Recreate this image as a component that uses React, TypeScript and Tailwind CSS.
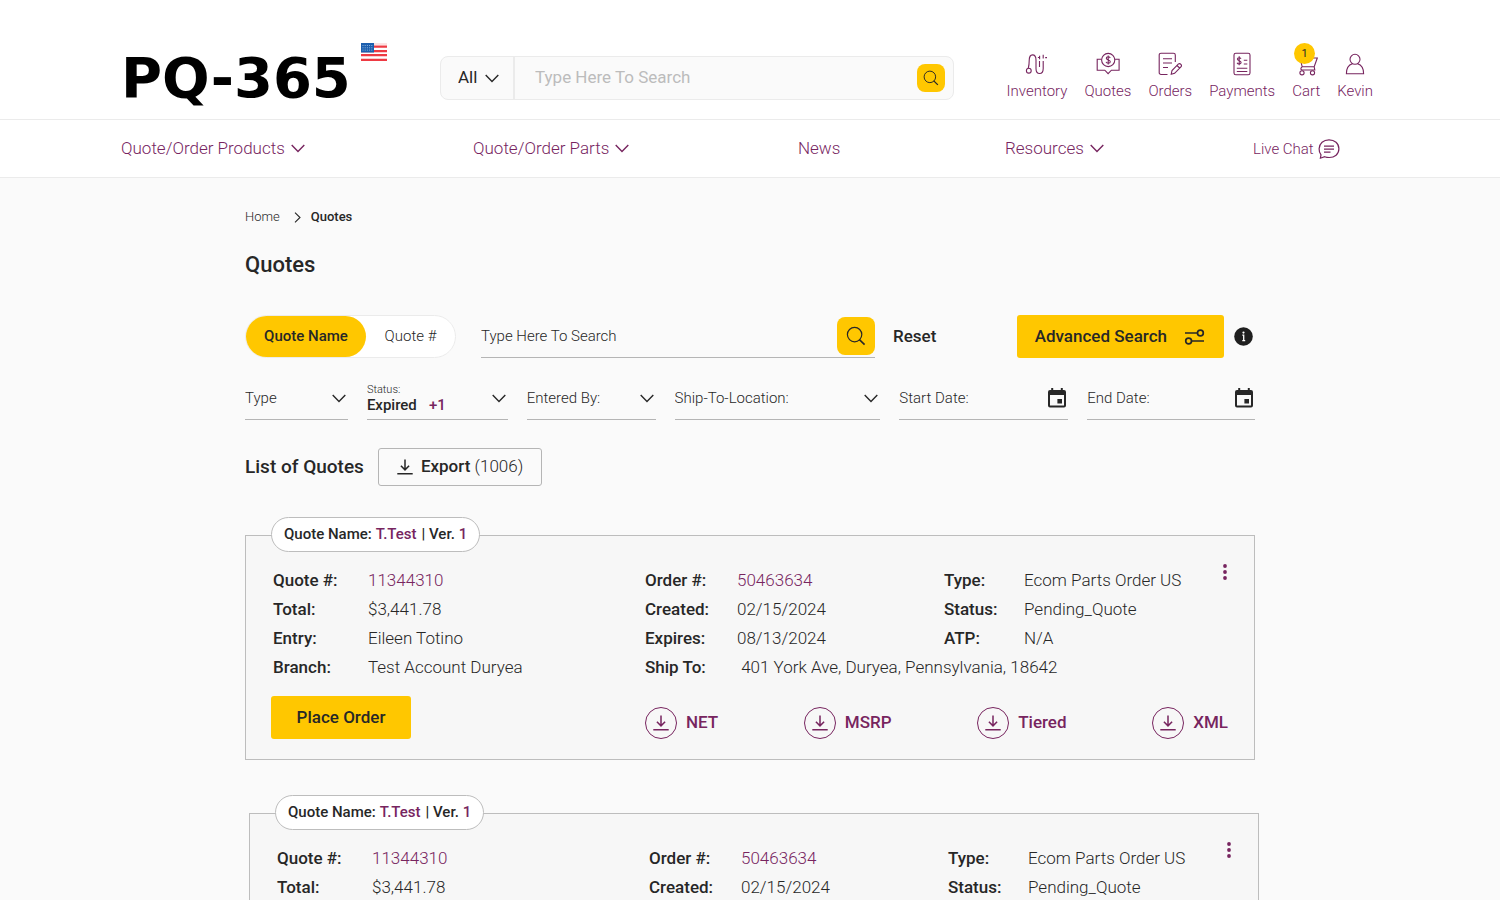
import React from "react";

type IconProps = { className?: string };

function Chevron({ className = "" }: IconProps) {
  return (
    <svg className={className} width="14" height="9" viewBox="0 0 14 9" fill="none" stroke="currentColor" strokeWidth="1.4" aria-hidden="true">
      <path d="M0.7 1 7 7.6 13.3 1" />
    </svg>
  );
}

function SearchIcon({ className = "" }: IconProps) {
  return (
    <svg className={className} viewBox="0 0 20 20" fill="none" stroke="currentColor" strokeWidth="1.2" aria-hidden="true">
      <circle cx="8.6" cy="8.6" r="7.2" />
      <path d="m13.4 13.6 5.2 5" strokeWidth="1.6" />
    </svg>
  );
}

function DownloadIcon({ className = "" }: IconProps) {
  return (
    <svg className={className} width="16" height="16" viewBox="0 0 16 16" fill="none" stroke="currentColor" strokeWidth="1.5" aria-hidden="true">
      <path d="M8 0.5v10.2M3.9 6.8 8 10.9l4.1-4.1M0.3 14.8h15.4" />
    </svg>
  );
}

function CalendarIcon() {
  return (
    <svg width="18" height="20" viewBox="0 0 18 20" fill="currentColor" aria-hidden="true">
      <path fillRule="evenodd" d="M3.2 0h2v2h7.6V0h2v2H16a2 2 0 0 1 2 2v13.5a2 2 0 0 1-2 2H2a2 2 0 0 1-2-2V4a2 2 0 0 1 2-2h1.2zM2 7v10.5h14V7zM9.4 11h4.6v4.5H9.4z" />
    </svg>
  );
}

function Flag() {
  return (
    <svg width="26" height="18" viewBox="0 0 26 18" role="img" aria-label="United States">
      <rect width="26" height="18" fill="#fff" />
      <path d="M0 3.7h26M0 8.2h26M0 12.2h26M0 16.8h26" stroke="#ee3a43" strokeWidth="2.2" />
      <path d="M0 1h26" stroke="#f9c4c6" strokeWidth="1" />
      <rect width="13" height="9.5" fill="#1c5fae" />
      <path d="M1.5 2.5h10M1.5 4.8h10M1.5 7.1h10" stroke="#8db4dd" strokeWidth="1" strokeDasharray="1 1.2" />
    </svg>
  );
}

const iconProps = {
  width: 24,
  height: 24,
  viewBox: "0 0 24 24",
  fill: "none",
  stroke: "currentColor",
  strokeWidth: 1.1,
  "aria-hidden": true,
} as const;

function InventoryIcon() {
  return (
    <svg {...iconProps}>
      <circle cx="3.8" cy="18.7" r="2.4" />
      <path d="M3.3 16.2c.7-2.6.9-5 .9-7.6C4.2 5 5.4 2.900 7.500 2.900s3.500 2.100 3.500 5.100v8.500c0 3.200 1.200 5 3.600 5s3.600-1.800 3.600-5V9" />
      <path d="M14.500 9v6" />
      <path d="M14.600 3.800v3.500M12.900 5.500h1.700M18.200 2.800v3.800M20.200 5.600h1.800" />
    </svg>
  );
}

function QuotesIcon() {
  return (
    <svg {...iconProps}>
      <circle cx="12.2" cy="8" r="6.6" />
      <path d="M5.5 7.3H1.2v10.9h7.6l3.3 3.4 3.3-3.4h7.7V7.3h-4.2" />
      <path d="M14.2 5.9c-.4-.8-1.100-1.100-2-1.100-1.100 0-1.900.6-1.900 1.500 0 2.200 4 1.100 4 3.400 0 .9-.9 1.500-2.100 1.500-1 0-1.800-.4-2.200-1.300M12.200 3.600v8.800" />
    </svg>
  );
}

function OrdersIcon() {
  return (
    <svg {...iconProps}>
      <path d="M9.5 22.500H3A1.800 1.800 0 0 1 1.200 20.700V3A1.800 1.800 0 0 1 3 1.200h12.500A1.800 1.800 0 0 1 17.300 3v7M5 6.700h9M5 11h9M5 15.500h5" />
      <path d="m13.200 22.300.8-3.800 6.200-6.400c1.900-1.400 4.300.9 2.700 2.900l-6.300 6.300zM19 13.500l2.600 2.500" />
    </svg>
  );
}

function PaymentsIcon() {
  return (
    <svg {...iconProps}>
      <rect x="4" y="1.200" width="16" height="21.600" rx="1.800" />
      <path d="M6.800 16.200h10.500M6.800 19.500h10.500M13.800 8.200h3.500M13.800 12h3.500" />
      <path d="M11 6.700c-.4-.7-1-1-1.800-1-1.100 0-1.800.5-1.800 1.400 0 2 3.700 1.200 3.700 3.300 0 .9-.8 1.500-2 1.500-.9 0-1.700-.4-2-1.200M9.200 4.300v9" />
    </svg>
  );
}

function CartIcon() {
  return (
    <svg {...iconProps}>
      <path d="M2 2h3l3.200 12.800h12L23.300 6H5.900M20.200 14.800l.6 3.200H8.300c-1.800 0-2-1.900-.1-3.200" />
      <circle cx="8" cy="20.800" r="2.100" />
      <circle cx="18.500" cy="20.800" r="2.100" />
    </svg>
  );
}

function UserIcon() {
  return (
    <svg {...iconProps}>
      <circle cx="12" cy="7.300" r="5" />
      <path d="M9.400 11.800c-3.700 1.100-6 4.500-6 9.900h17.200c0-5.400-2.300-8.800-6-9.900" />
    </svg>
  );
}

function ChatIcon() {
  return (
    <svg width="22" height="22" viewBox="0 0 22 22" fill="none" stroke="currentColor" strokeWidth="1.2" aria-hidden="true">
      <path d="M2.400 20.200 3 16.800C1.600 15 1 13.200 1.100 10.800 1.300 5.300 5.500 1.800 11 1.800c5.600 0 9.900 3.600 9.900 9s-4.300 8.700-9.600 8.700c-2 0-3.300-.3-4.600-.8z" />
      <path d="M6 8.200h10M6 11.200h10M6 14.200h6.500" />
    </svg>
  );
}

const accountLinks = [
  { label: "Inventory", Icon: InventoryIcon },
  { label: "Quotes", Icon: QuotesIcon },
  { label: "Orders", Icon: OrdersIcon },
  { label: "Payments", Icon: PaymentsIcon },
  { label: "Cart", Icon: CartIcon, badge: 1 },
  { label: "Kevin", Icon: UserIcon },
];

function TopBar() {
  return (
    <header className="flex h-[120px] items-end border-b border-[#ebebeb] bg-white pb-[19px] pl-[121px] pr-[127px]">
      <a href="#" className="flex w-[266px] shrink-0 items-start">
        <span className="flex-1 pt-3 font-['DejaVu_Sans','Liberation_Sans',sans-serif] text-[56px] leading-[45px] font-bold text-black">
          PQ-365
        </span>
        <Flag />
      </a>
      <form
        className="ml-[53px] flex h-11 min-w-0 flex-1 items-center rounded-lg border border-[#ebebeb] bg-[#fafafa]"
        onSubmit={(e) => e.preventDefault()}
      >
        <label className="relative flex h-full w-[74px] shrink-0 items-center border-r-2 border-[#ebebeb]">
          <select aria-label="Search category" className="h-full w-full appearance-none bg-transparent pl-[17px] text-[17px] outline-none">
            <option>All</option>
          </select>
          <Chevron className="pointer-events-none absolute right-3.5" />
        </label>
        <input
          aria-label="Search products"
          type="text"
          placeholder="Type Here To Search"
          className="min-w-0 flex-1 bg-transparent px-5 text-[17px] outline-none placeholder:text-[#bcbcbc]"
        />
        <button aria-label="Search" className="mr-2 grid size-7 place-items-center rounded-lg bg-[#ffc700]">
          <SearchIcon className="size-4" />
        </button>
      </form>
      <nav aria-label="Account" className="ml-[53px] flex shrink-0 gap-[17px] text-[#77255f]">
        {accountLinks.map(({ label, Icon, badge }) => (
          <a key={label} href="#" className="relative flex flex-col items-center gap-1.5 text-[15px] leading-[18px] font-light">
            <Icon />
            {label}
            {badge && (
              <span className="absolute -top-[9px] left-0.5 grid size-[21px] place-items-center rounded-full bg-[#ffc700] text-[11px] font-normal text-[#272727]">
                {badge}
              </span>
            )}
          </a>
        ))}
      </nav>
    </header>
  );
}

const menu = [
  { label: "Quote/Order Products", more: true },
  { label: "Quote/Order Parts", more: true },
  { label: "News", more: false },
  { label: "Resources", more: true },
];

function MainMenu() {
  return (
    <nav
      aria-label="Main"
      className="grid h-[58px] grid-cols-[352fr_325fr_207fr_248fr_121fr] items-center border-b border-[#ebebeb] bg-white pl-[121px] pr-[126px] text-[17px] font-light text-[#77255f]"
    >
      {menu.map(({ label, more }) => (
        <a key={label} href="#" className="flex items-center gap-1.5 whitespace-nowrap">
          {label}
          {more && <Chevron />}
        </a>
      ))}
      <a href="#" className="flex items-center gap-1 pt-px text-[15px] whitespace-nowrap">
        Live Chat
        <ChatIcon />
      </a>
    </nav>
  );
}

function FilterSelect({ label }: { label: string }) {
  return (
    <label className="relative flex items-center border-b border-[#b5b5b5]">
      <select aria-label={label} className="h-full w-full appearance-none bg-transparent pb-0.5 font-light outline-none">
        <option>{label}</option>
      </select>
      <Chevron className="pointer-events-none absolute top-3.5 right-0.5" />
    </label>
  );
}

function StatusSelect() {
  return (
    <div className="relative flex flex-col border-b border-[#b5b5b5] pt-1">
      <label htmlFor="status" className="text-[11px] leading-3 font-light">
        Status:
      </label>
      <select id="status" className="h-[18px] w-full appearance-none bg-transparent leading-[18px] font-medium outline-none">
        <option>Expired</option>
      </select>
      <span className="pointer-events-none absolute top-4 left-[62px] leading-[18px] font-medium text-[#77255f]">+1</span>
      <Chevron className="pointer-events-none absolute top-3.5 right-0.5" />
    </div>
  );
}

function DateField({ label }: { label: string }) {
  return (
    <div className="flex items-center border-b border-[#b5b5b5] pb-1">
      <input
        aria-label={label}
        type="text"
        placeholder={label}
        className="w-full min-w-0 flex-1 bg-transparent pt-0.5 font-light outline-none placeholder:text-[#272727]"
      />
      <button aria-label={"Choose " + label} className="mr-0.5">
        <CalendarIcon />
      </button>
    </div>
  );
}

function SearchTools() {
  return (
    <form onSubmit={(e) => e.preventDefault()}>
      <div className="mt-9 flex h-[43px] items-center">
        <fieldset
          aria-label="Search by"
          className="flex h-full w-[211px] shrink-0 items-center rounded-full border border-[#ebebeb] bg-white text-[15px]"
        >
          <label className="relative flex h-full w-[120px] items-center justify-center rounded-full font-light has-checked:bg-[#ffc700] has-checked:font-medium">
            <input type="radio" name="search-by" defaultChecked className="absolute inset-0 appearance-none" />
            Quote Name
          </label>
          <label className="relative flex h-full flex-1 items-center justify-center rounded-full font-light has-checked:bg-[#ffc700] has-checked:font-medium">
            <input type="radio" name="search-by" className="absolute inset-0 appearance-none" />
            Quote #
          </label>
        </fieldset>
        <div className="ml-[25px] flex h-full w-[394px] items-center border-b border-[#b5b5b5]">
          <input
            aria-label="Search quotes"
            type="text"
            placeholder="Type Here To Search"
            className="min-w-0 flex-1 bg-transparent text-[15px] font-light outline-none placeholder:text-[#272727]"
          />
          <button aria-label="Search quotes" className="grid size-[38px] place-items-center rounded-lg bg-[#ffc700]">
            <SearchIcon className="size-5" />
          </button>
        </div>
        <button type="reset" className="ml-[18px] text-[17px] font-medium">
          Reset
        </button>
        <button className="ml-auto flex h-full items-center gap-[17px] rounded-[3px] bg-[#ffc700] pr-[19px] pl-[18px] text-[17px] font-medium">
          Advanced Search
          <svg width="21" height="18" viewBox="0 0 21 18" fill="none" stroke="currentColor" strokeWidth="1.700" aria-hidden="true">
            <path d="M1 5h12M8 13h12" />
            <circle cx="16.400" cy="5" r="2.900" />
            <circle cx="4.600" cy="13" r="2.900" />
          </svg>
        </button>
        <button aria-label="Help" className="mr-0.5 ml-2.5">
          <svg width="19" height="19" viewBox="0 0 19 19" aria-hidden="true">
            <circle cx="9.500" cy="9.500" r="9.300" fill="#1f1f1f" />
            <path d="M8.300 8.200h1.400v5.300M8.300 13.700h2.900" stroke="#fff" strokeWidth="1.300" fill="none" />
            <circle cx="9.500" cy="5.600" r="1.100" fill="#fff" />
          </svg>
        </button>
      </div>
      <div className="mt-[22px] grid h-10 grid-cols-[103fr_141fr_129fr_206fr_169fr_168fr] gap-[19px] text-[15px]">
        <FilterSelect label="Type" />
        <StatusSelect />
        <FilterSelect label="Entered By:" />
        <FilterSelect label="Ship-To-Location:" />
        <DateField label="Start Date:" />
        <DateField label="End Date:" />
      </div>
    </form>
  );
}

type Field = { label: string; value: string; link?: boolean };

function Fields({ items, columns }: { items: Field[]; columns: string }) {
  return (
    <dl className={"grid content-start text-[17px] leading-[29px] whitespace-nowrap " + columns}>
      {items.map(({ label, value, link }) => (
        <React.Fragment key={label}>
          <dt className="font-medium">{label}</dt>
          <dd className="w-max font-light">
            {link ? (
              <a href="#" className="text-[#77255f]">
                {value}
              </a>
            ) : (
              value
            )}
          </dd>
        </React.Fragment>
      ))}
    </dl>
  );
}

const quote = {
  name: "T.Test",
  version: 1,
  account: [
    { label: "Quote #:", value: "11344310", link: true },
    { label: "Total:", value: "$3,441.78" },
    { label: "Entry:", value: "Eileen Totino" },
    { label: "Branch:", value: "Test Account Duryea" },
  ],
  order: [
    { label: "Order #:", value: "50463634", link: true },
    { label: "Created:", value: "02/15/2024" },
    { label: "Expires:", value: "08/13/2024" },
    { label: "Ship To:", value: "\u00a0401 York Ave, Duryea, Pennsylvania, 18642" },
  ],
  state: [
    { label: "Type:", value: "Ecom Parts Order US" },
    { label: "Status:", value: "Pending_Quote" },
    { label: "ATP:", value: "N/A" },
  ],
};

const downloads = ["NET", "MSRP", "Tiered", "XML"];

function QuoteCard() {
  return (
    <li className="even:ml-1 even:-mr-1">
      <h3 className="relative z-10 ml-[26px] -mb-[17px] flex h-[35px] w-fit items-center gap-1 rounded-full border border-[#bdbdbd] bg-white px-3 text-[15px] font-medium">
        <span>Quote Name:</span>
        <span className="text-[#77255f]">{quote.name}</span>
        <span className="pl-px">| Ver.</span>
        <span className="text-[#77255f]">{quote.version}</span>
      </h3>
      <div className="border border-[#bdbdbd] bg-[#f7f7f7] pt-[30px] pr-[19px] pb-5 pl-[25px]">
        <div className="flex items-start pl-0.5">
          <div className="grid flex-1 grid-cols-[minmax(0,372fr)_minmax(0,299fr)_minmax(0,271fr)]">
            <Fields items={quote.account} columns="grid-cols-[95px_minmax(0,1fr)]" />
            <Fields items={quote.order} columns="grid-cols-[92px_minmax(0,1fr)]" />
            <Fields items={quote.state} columns="grid-cols-[80px_minmax(0,1fr)]" />
          </div>
          <button aria-label="More actions" className="-mt-0.5 grid w-5 justify-items-center text-[#77255f]">
            <svg width="4" height="16" viewBox="0 0 4 16" fill="currentColor" aria-hidden="true">
              <circle cx="2" cy="2" r="1.900" />
              <circle cx="2" cy="8" r="1.900" />
              <circle cx="2" cy="14" r="1.900" />
            </svg>
          </button>
        </div>
        <div className="mt-3.5 grid grid-cols-[374fr_583fr] items-end pr-[7px]">
          <button className="h-[43px] w-[140px] rounded-[3px] bg-[#ffc700] text-[17px] font-medium">Place Order</button>
          <div className="flex justify-between">
            {downloads.map((format) => (
              <a key={format} href="#" className="flex items-center gap-[9px] text-[17px] font-medium text-[#77255f]">
                <span className="grid size-8 place-items-center rounded-full border border-[#77255f]">
                  <DownloadIcon />
                </span>
                {format}
              </a>
            ))}
          </div>
        </div>
      </div>
    </li>
  );
}

export default function App() {
  return (
    <div className="min-h-screen bg-[#fafafa] pb-9 font-['Roboto',sans-serif] text-[#272727]">
      <TopBar />
      <MainMenu />
      <main className="mx-auto max-w-[1010px] pt-[29px]">
        <nav aria-label="Breadcrumb" className="flex items-center text-[13px] leading-5">
          <a href="#" className="font-light">
            Home
          </a>
          <svg className="mr-2.5 ml-3.5" width="7" height="11" viewBox="0 0 7 11" fill="none" stroke="currentColor" strokeWidth="1.100" aria-hidden="true">
            <path d="m1 .6 5 4.900-5 4.900" />
          </svg>
          <span className="font-medium" aria-current="page">
            Quotes
          </span>
        </nav>
        <h1 className="mt-6 text-[22px] leading-7 font-medium">Quotes</h1>
        <SearchTools />
        <div className="mt-7 flex items-center gap-3.5">
          <h2 className="text-[19px] font-medium">List of Quotes</h2>
          <button className="flex h-[38px] items-center gap-2 rounded-[3px] border border-[#b5b5b5] px-[18px] text-[17px]">
            <DownloadIcon />
            <span>
              <span className="font-medium">Export</span> <span className="font-light">(1006)</span>
            </span>
          </button>
        </div>
        <ul className="mt-[31px] flex flex-col gap-[35px]">
          <QuoteCard />
          <QuoteCard />
        </ul>
      </main>
    </div>
  );
}
